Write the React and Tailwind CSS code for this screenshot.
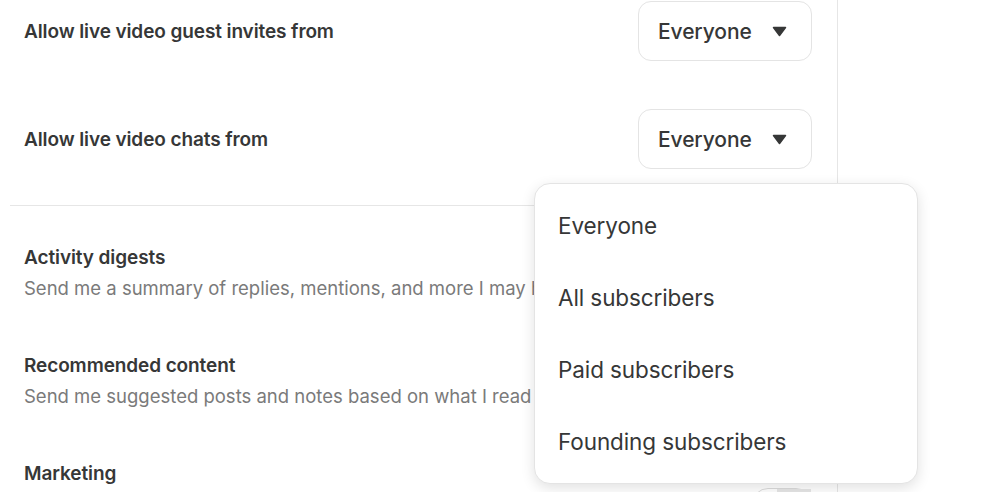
import React from "react";

const font = { fontFamily: "Inter, 'Noto Sans', sans-serif" };

function Caret() {
  return (
    <svg width="15" height="11" viewBox="0 0 15 11" className="shrink-0">
      <path d="M1.5 1.5 L13.5 1.5 L7.5 9.5 Z" fill="#363737" stroke="#363737" strokeWidth="1.5" strokeLinejoin="round" />
    </svg>
  );
}

function SelectRow({ label }) {
  return (
    <div className="flex items-center justify-between pl-[14px] pr-[25px] h-[60px]">
      <div className="text-[19px] font-semibold text-[#363737] tracking-[-0.1px] pt-[2px]">{label}</div>
      <div className="flex items-center w-[174px] h-[60px] border border-[#e4e4e4] rounded-[13px] pl-[19px] gap-[20px]">
        <span className="text-[21px] font-medium text-[#363737] tracking-[-0.1px] pt-[2px]">Everyone</span>
        <Caret />
      </div>
    </div>
  );
}

function InfoRow({ title, sub, right }) {
  return (
    <div className="flex justify-between pl-[14px] pr-[25px]">
      <div className="flex flex-col">
        <div className="text-[19px] leading-[24px] font-semibold text-[#363737] tracking-[-0.1px]">{title}</div>
        {sub && (
          <div className="text-[18.5px] leading-[24px] mt-[6px] text-[#7a7a7a] whitespace-nowrap">{sub}</div>
        )}
      </div>
      {right}
    </div>
  );
}

export default function App() {
  const items = ["Everyone", "All subscribers", "Paid subscribers", "Founding subscribers"];
  return (
    <div className="relative w-[1000px] h-[492px] overflow-hidden bg-white" style={font}>
      <div className="w-[838px] h-full border-r border-[#e6e6e6] pl-[10px] pt-[1px]">
        <div className="flex flex-col gap-[48px]">
          <SelectRow label="Allow live video guest invites from" />
          <SelectRow label="Allow live video chats from" />
        </div>
        <div className="mt-[36px] border-t border-[#e6e6e6]" />
        <div className="flex flex-col gap-[54px] pt-[40px]">
          <InfoRow title="Activity digests" sub="Send me a summary of replies, mentions, and more I may have missed" />
          <InfoRow title="Recommended content" sub="Send me suggested posts and notes based on what I read" />
          <InfoRow
            title="Marketing"
            right={
              <div className="mt-[26px] w-[60px] h-[32px] rounded-full border border-[#dcdcdc] bg-white flex items-center justify-end">
                <div className="w-[34px] h-[30px] bg-[#e6e6e6]" />
              </div>
            }
          />
        </div>
      </div>

      <div className="absolute left-[534px] top-[183px] w-[384px] h-[301px] bg-white border border-[#e4e4e4] rounded-[16px] shadow-[0_4px_14px_rgba(0,0,0,0.12)] pt-[6px]">
        {items.map((t) => (
          <div key={t} className="h-[72px] flex items-center px-[23px] text-[22.5px] text-[#363737] tracking-[-0.1px]">
            {t}
          </div>
        ))}
      </div>
    </div>
  );
}
